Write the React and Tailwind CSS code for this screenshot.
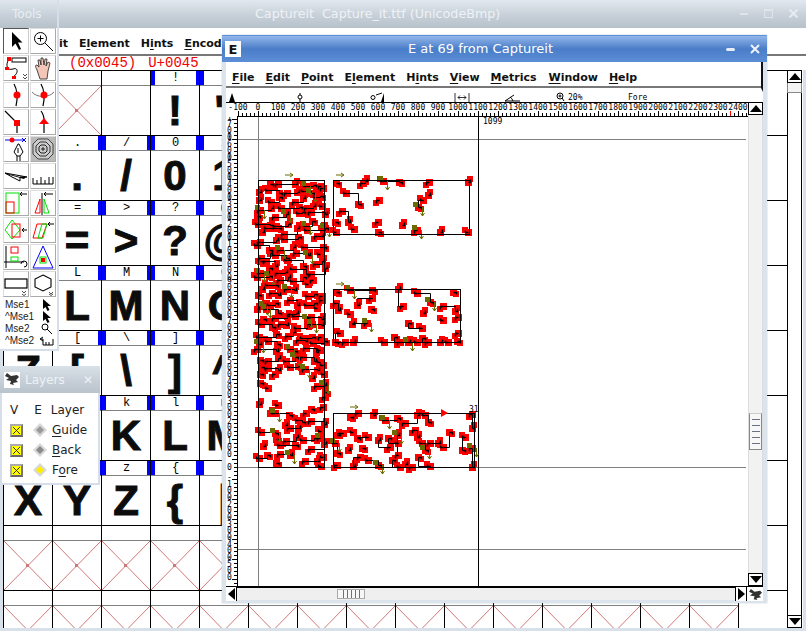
import React from 'react';

// FontForge session: font view behind, tool + layer palettes, glyph outline window on top

const menuFont = { fontFamily: '"DejaVu Sans", sans-serif' };
const monoFont = { fontFamily: '"Liberation Mono", monospace' };
const rulerFont = { fontFamily: '"DejaVu Sans Mono", monospace' };

const MenuLabel = ({ pre = '', u, post = '' }) => (
  <span className="whitespace-nowrap">
    {pre}
    <span className="underline underline-offset-2">{u}</span>
    {post}
  </span>
);

const UpArrow = () => (
  <div className="flex h-[13px] w-[15px] shrink-0 items-center justify-center border border-black bg-white">
    <div className="h-0 w-0 border-x-[6px] border-b-[7px] border-x-transparent border-b-black" />
  </div>
);

const DownArrow = () => (
  <div className="flex h-[13px] w-[15px] shrink-0 items-center justify-center border border-black bg-white">
    <div className="h-0 w-0 border-x-[6px] border-t-[7px] border-x-transparent border-t-black" />
  </div>
);

const Grip = ({ vertical }) => (
  <div className={`flex ${vertical ? 'h-full w-[8px] flex-col' : 'h-[8px] w-full flex-row'} justify-around`}>
    {[0, 1, 2, 3, 4].map((i) => (
      <div key={i} className={vertical ? 'h-px w-full bg-gray-500' : 'h-full w-px bg-gray-500'} />
    ))}
  </div>
);

/* ---------- font view grid ---------- */

const Cross = () => (
  <svg width="48" height="49" className="block">
    <path d="M0 0L48 49M48 0L0 49" stroke="#d07878" strokeWidth="1" fill="none" />
    <rect x="22" y="23" width="3" height="3" fill="#d07878" />
  </svg>
);

const rows = [0, 1, 2, 3, 4, 5, 6, 7, 8];

const FontCell = ({ code }) => {
  const has = code > 0x20 && code < 0x7f;
  const ch = String.fromCharCode(code);
  return (
    <div className="w-[49px] shrink-0 border-r border-black">
      <div className="flex h-[15px] justify-between border-b border-[#808080] text-[12px] leading-[14px]" style={monoFont}>
        <span className={`w-1 ${has ? 'bg-[#0000ff]' : ''}`} />
        <span>{has ? ch : ''}</span>
        <span className={`w-[3px] ${has ? 'bg-[#0000ff]' : ''}`} />
      </div>
      <div
        className="h-[49px] overflow-hidden text-center text-[42px] font-bold uppercase leading-[49px] text-[#0c0c0c] [-webkit-text-stroke:1px_#0c0c0c]"
        style={{ fontFamily: '"Liberation Sans", sans-serif' }}
      >
        {has ? ch : code === 0x20 ? '' : <Cross />}
      </div>
    </div>
  );
};

const FontView = () => (
  <div className="flex h-full flex-col">
    <div className="relative flex h-[28px] shrink-0 items-center bg-gradient-to-b from-[#e2e8ef] via-[#c9d2da] to-[#b7c1ca] pl-[255px] text-[12.700px] text-[#eef2f6]" style={menuFont}>
      <span className="whitespace-pre">Captureit  Capture_it.ttf (UnicodeBmp)</span>
      <div className="absolute right-[8px] top-[9px] flex items-center gap-[16px]">
        <div className="h-[2px] w-[8px] bg-[#dfe5eb]" />
        <div className="h-[9px] w-[9px] border border-t-2 border-[#dfe5eb]" />
        <svg width="9" height="9" className="block"><path d="M0.500 0.500L8.500 8.500M8.500 0.500L0.500 8.500" stroke="#e6ebf0" strokeWidth="2" /></svg>
      </div>
    </div>
    <div className="flex h-[28px] shrink-0 items-center gap-[11px] border-b-[2px] border-[#777] bg-white pl-[10px] pt-[7px] text-[11px] font-bold text-[#111]" style={menuFont}>
      <MenuLabel u="F" post="ile" />
      <MenuLabel u="E" post="dit" />
      <MenuLabel pre="E" u="l" post="ement" />
      <MenuLabel pre="H" u="i" post="nts" />
      <MenuLabel u="E" post="ncoding" />
    </div>
    <div className="flex h-[14px] shrink-0 items-center gap-[12px] bg-white pl-[69px] text-[14px] leading-[14px] text-[#f00000]" style={monoFont}>
      <span>(0x0045)</span>
      <span>U+0045</span>
    </div>
    <div className="flex min-h-0 flex-1 border-x-[3px] border-[#d8e0ea] bg-white">
      <div className="w-[784px] overflow-hidden border-t border-black">
        {rows.map((r) => (
          <div key={r} className="flex border-b border-black">
            <div className="w-0 border-l border-black" />
            {Array.from({ length: 15 }, (_, i) => (
              <FontCell key={i} code={0x1e + r * 15 + i} />
            ))}
          </div>
        ))}
      </div>
      <div className="flex w-[15px] flex-col">
        <UpArrow />
        <div className="h-[10px] border-x border-b border-[#888] bg-[#f4f4f4]" />
        <div className="flex-1 border-x border-black bg-white" />
        <DownArrow />
      </div>
    </div>
    <div className="h-[3px] shrink-0 bg-[#d8e0ea]" />
  </div>
);

/* ---------- tool palette ---------- */

const Tool = ({ children, active }) => (
  <div className={`h-[26px] w-[26px] border ${active ? 'border-[#555] border-r-[#ccc] border-b-[#ccc]' : 'border-[#ddd] border-r-[#aaa] border-b-[#aaa]'} bg-white`}>
    <svg width="24" height="24" viewBox="0 0 24 24" className="block">{children}</svg>
  </div>
);

const R = '#ff0000';
const G = '#00e000';

const toolIcons = [
  <path key="a" d="M8 3L8 18L11.500 14.500L15 21L17 20L14 13.500L18.500 13.500Z" fill="#000" />,
  <g key="b" fill="none" stroke="#000"><circle cx="9.500" cy="9.500" r="6" /><path d="M9.500 6.500v6M6.500 9.500h6M14 14L22 22" /></g>,
  <g key="c" fill="none"><path d="M5 3C1 9 3 15 9 13C14 11 15 17 9 21" stroke="#000" /><rect x="8" y="2" width="14" height="4" stroke="#000" /><rect x="3" y="1" width="4" height="4" fill={R} /><rect x="1" y="11" width="4" height="3" fill={R} /><rect x="8" y="20" width="4" height="3" fill={R} /><path d="M19 18l2 2 2-2M19 21l2 2 2-2" stroke="#000" strokeWidth=".7" /></g>,
  <g key="d"><path d="M6 14C4 10 4 9 6 9L8 11L7 4L9 4L10 9L10 2L12 2L13 9L14 3L16 3L15 10L17 6L19 7L17 15L16 23L9 23Z" fill="#f3c6b8" stroke="#222" strokeWidth=".8" /></g>,
  <g key="e"><path d="M10 1C14 8 14 14 12 23" fill="none" stroke="#000" strokeWidth="1.200" /><circle cx="13" cy="12" r="3.500" fill={R} /></g>,
  <g key="f"><path d="M10 1C14 8 14 14 12 23" fill="none" stroke="#000" strokeWidth="1.200" /><path d="M1 9C6 15 18 15 23 9" fill="none" stroke="#777" /><circle cx="13" cy="12" r="3.500" fill={R} /></g>,
  <g key="g"><path d="M1 1L13 13L13 23" fill="none" stroke="#000" strokeWidth="1.200" /><rect x="10" y="10" width="6" height="6" fill={R} /></g>,
  <g key="h"><path d="M10 1C14 6 13 10 13 14L13 23" fill="none" stroke="#000" strokeWidth="1.200" /><path d="M8 14L13 8L18 14Z" fill={R} /></g>,
  <g key="i"><path d="M1 3H21" stroke="#00f" /><circle cx="8" cy="3" r="2.500" fill={R} /><path d="M18 1l4 4M22 1l-4 4" stroke="#00f" /><path d="M14 7l-4 8 3 4 3 0 3-4-4-8zM13 19v5M16 19v5M14 11v5" fill="none" stroke="#000" /></g>,
  <g key="j"><rect width="24" height="24" fill="#bbb" /><path d="M7 2H17L22 7V17L17 22H7L2 17V7Z" fill="#ccc" stroke="#444" /><path d="M9 5H15L19 9V15L15 19H9L5 15V9Z" fill="none" stroke="#333" /><path d="M10 8H14L16 10V14L14 16H10L8 14V10ZM11 11h2v2h-2z" fill="none" stroke="#222" /></g>,
  <g key="k"><path d="M1 9L23 13L16 13L16 17L8 13L1 9" fill="none" stroke="#000" /><path d="M1 9L16 13H22L20 15L2 10Z" fill="#000" /></g>,
  <path key="l" d="M2 14V20H22V13M6 16V20M10 13V20M14 16V20M18 13V20" fill="none" stroke="#000" strokeWidth="1" />,
  <g key="m" fill="none"><rect x="2" y="2" width="13" height="20" stroke={G} /><rect x="2" y="11" width="8" height="11" stroke={R} /><path d="M23 3H16M18 1l-2 2 2 2" stroke="#000" /></g>,
  <g key="n" fill="none"><path d="M11 2V24M22 3H13M15 1l-2 2 2 2" stroke="#000" /><path d="M9 8L4 22H9Z" stroke={R} /><path d="M13 8L18 22H13Z" stroke={G} /></g>,
  <g key="o" fill="none"><path d="M8 2L16 12L8 21L1 12Z" stroke={G} /><rect x="8" y="6" width="8" height="13" stroke={R} /><path d="M23 12H18M20 10l-2 2 2 2" stroke="#000" /></g>,
  <g key="p" fill="none"><path d="M6 6H16L11 20H2Z" stroke={R} /><path d="M11 6H16L12 20H7Z" stroke={G} /><path d="M23 6H17M19 4l-2 2 2 2" stroke="#000" /></g>,
  <g key="q" fill="none"><path d="M2 1V23M0 17H20" stroke="#000" /><rect x="7" y="2" width="7" height="6" stroke={R} /><rect x="7" y="12" width="7" height="4" stroke={G} /><path d="M17 19a3 3 0 1 1 3 3" stroke="#000" /></g>,
  <g key="r" fill="none"><path d="M12 1L2 23H22Z" stroke="#00f" /><rect x="9" y="12" width="6" height="6" stroke={G} /><rect x="10" y="13" width="4" height="4" fill={R} /></g>,
  <g key="s" fill="none"><rect x="1" y="7" width="22" height="9" stroke="#000" strokeWidth="1.200" /><path d="M18 19l2 2 2-2M18 22l2 1.500 2-1.500" stroke="#000" strokeWidth=".7" /></g>,
  <g key="t" fill="none"><path d="M12 3L20 7V15L12 19L4 15V7Z" stroke="#000" strokeWidth="1.100" /><path d="M18 20l2 2 2-2M18 22l2 1.500 2-1.500" stroke="#000" strokeWidth=".7" /></g>,
];

const MouseRow = ({ label, children }) => (
  <div className="flex h-[12px] items-center justify-between pr-[2px] text-[10px] leading-[12px] text-[#222]" style={{ fontFamily: '"Liberation Sans", sans-serif' }}>
    <span>{label}</span>
    <svg width="16" height="12" className="block">{children}</svg>
  </div>
);

const arrowSmall = <path d="M4 0V10L6.500 8L8.500 12L10.500 11L8.500 7H12Z" fill="#000" />;

const ToolsPalette = () => (
  <div className="absolute left-0 top-0 flex h-[351px] w-[59px] flex-col border-r-2 border-b-2 border-[#d6dfe9] bg-white">
    <div className="flex h-[28px] shrink-0 items-center bg-gradient-to-b from-[#dfe6ed] via-[#c9d2da] to-[#b7c1ca] pl-[12px] text-[12px] text-[#e9eef3]" style={menuFont}>
      Tools
    </div>
    <div className="grid grid-cols-[26px_26px] gap-[1px] pl-[3px]">
      {toolIcons.map((ic, i) => (
        <Tool key={i} active={i === 0}>{ic}</Tool>
      ))}
    </div>
    <div className="mt-[2px] pl-[5px]">
      <MouseRow label="Mse1">{arrowSmall}</MouseRow>
      <MouseRow label="^Mse1">{arrowSmall}</MouseRow>
      <MouseRow label="Mse2">
        <g fill="none" stroke="#000"><circle cx="6" cy="4" r="3" /><path d="M8 6L13 11" /></g>
      </MouseRow>
      <MouseRow label="^Mse2">
        <path d="M2 4H4V10H14V4M7 7V10M10 7V10M4 2L1 4L4 6" fill="none" stroke="#000" />
      </MouseRow>
    </div>
  </div>
);

/* ---------- layers palette ---------- */

const Hat = ({ w = 16, h = 14 }) => (
  <svg width={w} height={h} viewBox="0 0 16 14" className="block">
    <path d="M3 1L7 4L13 3L15 5L12 8L14 10L9 11L10 13L6 12L7 9L2 8L5 6L1 4Z" fill="#333" />
  </svg>
);

const LayerRow = ({ pre = '', u, post = '', fill = '#9a9a9a' }) => (
  <div className="flex h-[20px] items-center">
    <div className="ml-[8px] flex h-[13px] w-[13px] items-center justify-center border-2 border-[#aaa] border-r-[#777] border-b-[#666] bg-[#ffff00]">
      <svg width="9" height="9"><path d="M1 1L8 8M8 1L1 8" stroke="#333" /></svg>
    </div>
    <svg width="14" height="14" className="ml-[10px] block">
      <path d="M7 0L14 7L7 14L0 7Z" fill="#d8d8d8" />
      <path d="M7 3L11 7L7 11L3 7Z" fill={fill} />
    </svg>
    <span className="ml-[5px] text-[12px] text-[#222]" style={menuFont}>
      {pre}<span className="underline underline-offset-2">{u}</span>{post}
    </span>
  </div>
);

const LayersPalette = () => (
  <div className="absolute left-0 top-[366px] flex h-[119px] w-[100px] flex-col border-2 border-t-0 border-[#d6dfe9] bg-white">
    <div className="-mx-[2px] flex h-[27px] shrink-0 items-center gap-[5px] bg-gradient-to-b from-[#d9e1e8] via-[#c8d1d9] to-[#b9c3cc] pl-[4px] pr-[7px] text-[12px] text-[#eef2f6]" style={menuFont}>
      <div className="h-[16px] w-[16px] bg-white"><Hat /></div>
      <span className="flex-1">Layers</span>
      <span className="text-[12px]">✕</span>
    </div>
    <div className="mt-[10px] flex h-[14px] items-center text-[12px] text-[#222]" style={menuFont}>
      <span className="ml-[8px]">V</span>
      <span className="ml-[16px]">E</span>
      <span className="ml-[9px]">Layer</span>
    </div>
    <div className="mt-[3px]">
      <LayerRow u="G" post="uide" fill="#9a9a9a" />
      <LayerRow u="B" post="ack" fill="#8a8a8a" />
      <LayerRow pre="F" u="o" post="re" fill="#ffee00" />
    </div>
  </div>
);

/* ---------- glyph window ---------- */

const topArm = [[336,183],[363,183],[365,181],[383,181],[399,182],[429,182],[468,182],[346,193],[358,204],[379,200],[428,195],[423,200],[418,207],[342,211],[348,222],[354,229],[335,222],[378,222],[402,225],[336,232],[378,232],[417,230],[440,232],[468,232]];
const midArm = [[336,292],[336,303],[338,310],[350,290],[372,290],[372,298],[357,305],[350,314],[371,309],[403,306],[398,289],[417,293],[430,302],[443,306],[455,311],[443,320],[453,292],[458,317],[423,313],[422,328],[408,323],[367,323],[352,324],[340,333],[335,342],[345,342],[353,342],[384,342],[394,337],[400,342],[408,342],[417,342],[422,338],[428,342],[440,342],[448,342],[457,341],[458,333]];
const botArm = [[350,417],[358,413],[373,415],[385,420],[397,418],[405,423],[417,415],[425,415],[428,422],[415,430],[417,437],[422,443],[425,450],[430,443],[438,443],[443,447],[449,432],[472,414],[472,428],[465,437],[462,450],[472,448],[472,467],[430,466],[418,457],[412,467],[405,464],[400,467],[392,460],[398,455],[397,435],[398,443],[388,438],[390,447],[378,440],[368,437],[357,438],[343,433],[337,435],[335,443],[337,453],[337,465],[348,450],[353,432],[362,448],[360,457],[353,466],[368,460],[378,465]];

// stem of the E is a dense scatter of little contours, made with a fixed seed so it never changes
const makeStem = () => {
  let seed = 4711;
  const rnd = () => {
    seed = (seed * 16807) % 2147483647;
    return seed / 2147483647;
  };
  const pts = [];
  for (let y = 183; y <= 465; y += 8) {
    for (let x = 260; x <= 324; x += 9) {
      let skip = 0.14;
      if (y > 372 && y < 408) skip = x > 280 && x < 308 ? 0.97 : 0.45;
      else if (y >= 408) skip = 0.28;
      if (rnd() > skip) {
        pts.push([Math.round(x + (rnd() - 0.5) * 7), Math.round(y + (rnd() - 0.5) * 7)]);
      }
    }
  }
  return pts;
};

const stem = makeStem();
const allPoints = [stem, topArm, midArm, botArm];

const near = (a, b) => Math.abs(a[0] - b[0]) + Math.abs(a[1] - b[1]) < 24;
const blobs = [[3, 2], [-3, 3], [2, -3], [-3, -2]];

const PointSet = () => (
  <g>
    {allPoints.map((pts, k) => (
      <g key={k}>
        {pts.map((p, i) => {
          const o = blobs[i % 4];
          return (
            <g key={i} fill="#ff0000">
              <rect x={p[0] - 3} y={p[1] - 3} width="7" height="7" />
              <rect x={p[0] - 3 + o[0]} y={p[1] - 3 + o[1]} width="6" height="6" />
            </g>
          );
        })}
        {pts.map((p, i) => (
          <path key={i} d={`M${p[0] + 0.5} ${p[1] + 0.5}h${blobs[i % 4][0]}v${blobs[i % 4][1]}`} fill="none" stroke="#000" strokeWidth="1.500" />
        ))}
        {pts.map((p, i) => (i > 0 && i % 2 === 0 && near(p, pts[i - 1]) ? (
          <path key={i} d={`M${pts[i - 1][0] + 0.5} ${pts[i - 1][1] + 0.5}L${p[0] + 0.5} ${pts[i - 1][1] + 0.5}L${p[0] + 0.5} ${p[1] + 0.5}`} fill="none" stroke="#000" strokeWidth="1" />
        ) : null))}
        {pts.map((p, i) => (i % 9 === 3 ? (
          <g key={i}>
            <rect x={p[0] - 5} y={p[1] - 5} width="5" height="5" fill="#6b6b00" />
            <path d={`M${p[0] + 4.500} ${p[1]}v9m-2 -3l2 3l2 -3`} fill="none" stroke="#6b6b00" strokeWidth="1" />
          </g>
        ) : null))}
      </g>
    ))}
  </g>
);

const hLabels = Array.from({ length: 26 }, (_, i) => -100 + i * 100);
const hTicks = Array.from({ length: 128 }, (_, i) => 238 + i * 4);
const vLabels = Array.from({ length: 23 }, (_, i) => 1700 - i * 100);
const vTicks = Array.from({ length: 117 }, (_, i) => 119 + i * 4);

const GlyphCanvas = () => (
  <svg width="522" height="494" viewBox="226 92 522 494" className="block">
    {/* info strip */}
    <g fill="#000">
      <path d="M232 93V102L229 102Z M232 93L235 102H232Z" />
      <circle cx="300" cy="97" r="2" fill="none" stroke="#000" />
      <path d="M300 93V95M300 99V102" stroke="#000" />
      <circle cx="373" cy="97.500" r="2" fill="none" stroke="#000" />
      <path d="M376 95L382 93" stroke="#000" />
      <path d="M384 93V102L381 102Z" />
      <path d="M455 93V102M469 93V102M458 97.500H466M458 97.500l2-2M458 97.500l2 2M466 97.500l-2-2M466 97.500l-2 2" stroke="#000" strokeWidth=".8" fill="none" />
      <path d="M505 101H520M505 101L514 95M513 101a7 7 0 0 0-3-4" stroke="#000" fill="none" />
      <circle cx="560" cy="96" r="3" fill="none" stroke="#000" />
      <path d="M558.500 96h3M560 94.500v3M562 98l2 3" stroke="#000" fill="none" />
      <text x="568" y="100" fontSize="8" style={rulerFont}>20%</text>
      <text x="628" y="100" fontSize="8" style={rulerFont}>Fore</text>
    </g>

    {/* horizontal ruler */}
    <path d="M226 102.500H748" stroke="#000" />
    <g fontSize="8" textAnchor="middle" fill="#000" style={rulerFont}>
      {hLabels.map((v) => (
        <text key={v} x={258 + v * 0.2} y="110">{v}</text>
      ))}
    </g>
    <g stroke="#000">
      {hTicks.map((x) => (
        <path key={x} d={`M${x + 0.5} ${(x - 238) % 20 === 0 ? 111 : 113}V116`} />
      ))}
    </g>
    <path d="M730.500 111V116" stroke="#ff0000" />
    <path d="M237 116.500H748" stroke="#000" />

    {/* vertical ruler */}
    <svg x="226" y="117" width="11" height="469" viewBox="226 117 11 469">
      <g fontSize="8" fill="#000" textAnchor="middle" style={rulerFont}>
        {vLabels.map((v) => {
          const s = String(v);
          const y = 467 - v * 0.2;
          return s.split('').map((c, i) => (
            <text key={`${v}${i}`} x="229.500" y={y + (i - (s.length - 1) / 2) * 6.5 + 3}>{c}</text>
          ));
        })}
      </g>
      <g stroke="#000">
        {vTicks.map((y) => (
          <path key={y} d={`M${(y - 119) % 20 === 0 ? 232 : 234} ${y + 0.5}H237`} />
        ))}
      </g>
    </svg>
    <path d="M237.500 116V586" stroke="#000" />

    {/* guide lines */}
    <g stroke="#808080">
      <path d="M238 139.500H746M238 467.500H746M238 549.500H746M258.500 117V586" />
    </g>
    <path d="M478.500 117V586" stroke="#000" />
    <text x="483" y="124" fontSize="8" fill="#000" style={rulerFont}>1099</text>

    <PointSet />

    {/* outline boxes */}
    <g fill="none" stroke="#000">
      <rect x="258.500" y="180.500" width="66" height="287" />
      <rect x="333.500" y="180.500" width="136" height="54" />
      <rect x="333.500" y="289.500" width="127" height="53" />
      <rect x="333.500" y="413.500" width="141" height="54" />
    </g>
    <text x="469" y="412" fontSize="8" fill="#000" style={rulerFont}>31</text>
    <path d="M285 175h8m-3-2l3 2l-3 2M336 175h8m-3-2l3 2l-3 2M336 284h8m-3-2l3 2l-3 2M350 407h8m-3-2l3 2l-3 2" fill="none" stroke="#6b6b00" />
    <path d="M441 409L448 413L441 417Z" fill="#ff0000" />
  </svg>
);

const GlyphWindow = () => (
  <div className="absolute left-[222px] top-[35px] flex h-[568px] w-[545px] flex-col bg-[#dbe3ed] shadow-[0_0_1px_#8aa]">
    <div className="relative flex h-[27px] shrink-0 items-center justify-center rounded-t-[1px] border-t border-[#5d8fd8] bg-gradient-to-b from-[#92b6ea] via-[#4a7dc8] to-[#5c8fd6] text-[13px] text-white" style={menuFont}>
      <div className="absolute left-[3px] top-[5px] flex h-[16px] w-[16px] items-center justify-center bg-white text-[13px] font-bold leading-none text-[#111]">E</div>
      <span className="ml-[-28px]">E at 69 from Captureit</span>
      <div className="absolute right-[32px] top-[12px] h-[3px] w-[9px] rounded-sm bg-[#e8eef8]" />
      <svg width="10" height="10" className="absolute right-[7px] top-[8px] block"><path d="M1 1L9 9M9 1L1 9" stroke="#eef3fa" strokeWidth="2" /></svg>
    </div>
    <div className="mx-[4px] flex min-h-0 flex-1 flex-col bg-white">
      <div className="flex h-[30px] shrink-0 items-center gap-[11px] border-b-[4px] border-r-[2px] border-b-white pl-[6px] pt-[7px] text-[11px] font-bold text-[#111] shadow-[inset_0_-2px_0_#777]" style={menuFont}>
        <MenuLabel u="F" post="ile" />
        <MenuLabel u="E" post="dit" />
        <MenuLabel u="P" post="oint" />
        <MenuLabel pre="E" u="l" post="ement" />
        <MenuLabel pre="H" u="i" post="nts" />
        <MenuLabel u="V" post="iew" />
        <MenuLabel u="M" post="etrics" />
        <span className="ml-px"><MenuLabel u="W" post="indow" /></span>
        <MenuLabel u="H" post="elp" />
      </div>
      <div className="flex min-h-0 flex-1">
        <GlyphCanvas />
        <div className="mt-[10px] flex w-[15px] flex-col">
          <UpArrow />
          <div className="flex flex-1 flex-col border-x border-[#ddd] bg-[#f2f2f2]">
            <div className="flex-1" />
            <div className="flex h-[37px] flex-col items-center border border-[#888] border-t-[#ccc] bg-[#f7f7f7] py-[3px]">
              <Grip vertical />
            </div>
            <div className="h-[123px]" />
          </div>
          <DownArrow />
        </div>
      </div>
      <div className="flex h-[14px] shrink-0 items-center border-t-2 border-black bg-[#efefef]">
        <div className="flex h-[14px] w-[11px] items-center justify-center border-r border-black bg-white">
          <div className="h-0 w-0 border-y-[6px] border-r-[7px] border-y-transparent border-r-black" />
        </div>
        <div className="ml-[100px] flex h-[10px] w-[28px] items-center border border-[#aaa] bg-[#f7f7f7] px-[3px]">
          <Grip />
        </div>
        <div className="flex-1" />
        <div className="flex h-[14px] w-[12px] items-center justify-center border-x border-black bg-white">
          <div className="h-0 w-0 border-y-[6px] border-l-[7px] border-y-transparent border-l-black" />
        </div>
        <div className="flex h-[14px] w-[16px] items-center justify-center bg-white"><Hat w={15} h={13} /></div>
      </div>
    </div>
    <div className="h-[3px] shrink-0" />
  </div>
);

const App = () => (
  <div className="relative h-[631px] w-[806px] overflow-hidden bg-[#d8e0ea]">
    <FontView />
    <GlyphWindow />
    <ToolsPalette />
    <LayersPalette />
  </div>
);

export default App;
